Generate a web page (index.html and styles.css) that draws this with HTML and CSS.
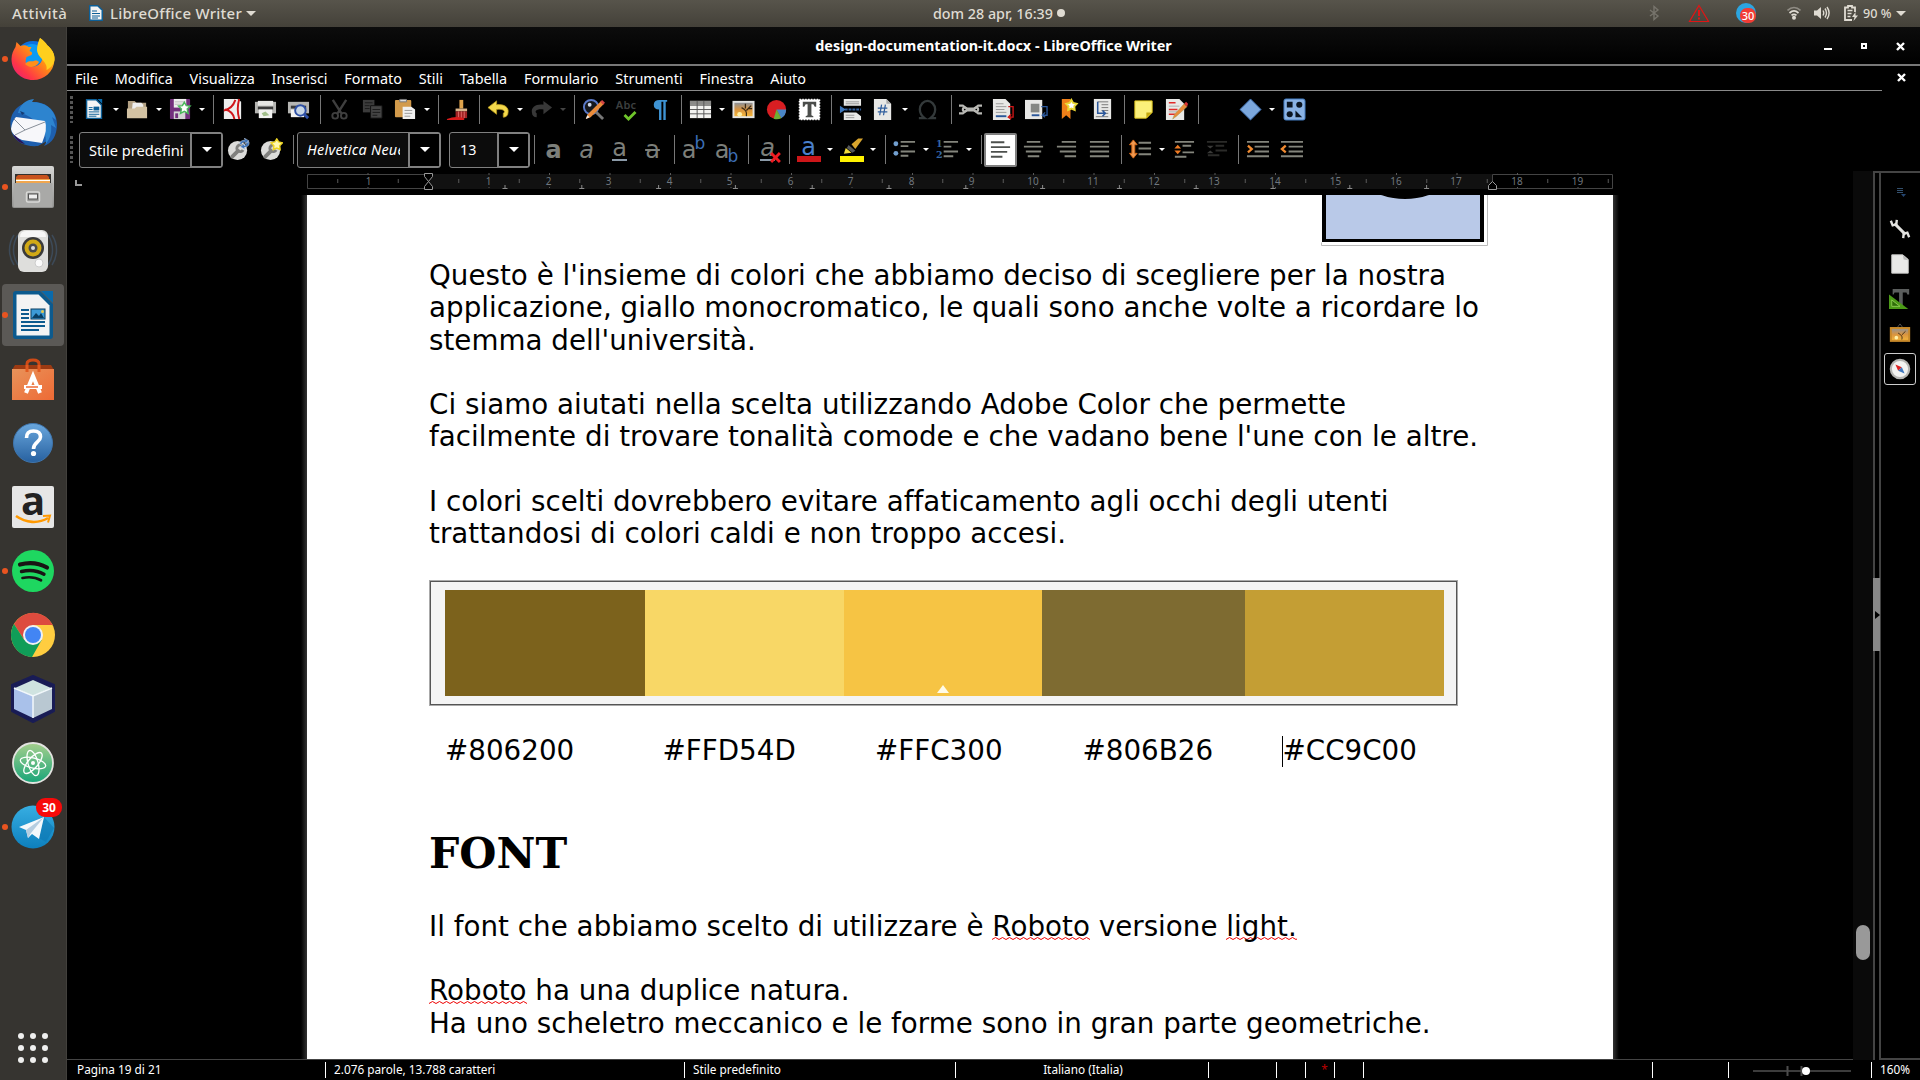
FILE: index.html
```html
<!DOCTYPE html>
<html lang="it">
<head>
<meta charset="utf-8">
<title>design-documentation-it.docx - LibreOffice Writer</title>
<link rel="stylesheet" href="styles.css">
</head>
<body>
<svg class="defs" width="0" height="0">
  <defs>
    <linearGradient id="metal" x1="0" y1="0" x2="0" y2="1"><stop offset="0" stop-color="#d8d8d6"/><stop offset="1" stop-color="#8f8f8d"/></linearGradient>
    <linearGradient id="blue" x1="0" y1="0" x2="0" y2="1"><stop offset="0" stop-color="#6aa7dd"/><stop offset="1" stop-color="#2761a0"/></linearGradient>
    <linearGradient id="tele" x1="0" y1="0" x2="0" y2="1"><stop offset="0" stop-color="#37aee2"/><stop offset="1" stop-color="#0d7fbd"/></linearGradient>
    <linearGradient id="atom" x1="0" y1="0" x2="0" y2="1"><stop offset="0" stop-color="#a5cf8c"/><stop offset="1" stop-color="#17a578"/></linearGradient>
    <linearGradient id="bag" x1="0" y1="0" x2="1" y2="1"><stop offset="0" stop-color="#e8935a"/><stop offset="1" stop-color="#ee6a35"/></linearGradient>
    <linearGradient id="fox" x1="1" y1="0" x2="0" y2="1"><stop offset="0" stop-color="#ffe226"/><stop offset=".45" stop-color="#ff8a16"/><stop offset=".75" stop-color="#ff3647"/><stop offset="1" stop-color="#e31587"/></linearGradient>
    <linearGradient id="sunset" x1="0" y1="0" x2="0" y2="1"><stop offset="0" stop-color="#8d9299"/><stop offset=".5" stop-color="#d99440"/><stop offset="1" stop-color="#f5b63a"/></linearGradient>
    <symbol id="wrench" viewBox="0 0 24 24"><circle cx="11" cy="13" r="10" fill="#dcdcda"/><path d="M5.500 19.500l6-6" stroke="#80807e" stroke-width="4" stroke-linecap="round"/><path d="M16.500 8.500a3.500 3.500 0 1 0 .3 4" fill="none" stroke="#80807e" stroke-width="3"/></symbol>
  </defs>
</svg>

<header class="topbar">
  <span class="activities">Attività</span>
  <span class="app-menu">
    <svg width="14" height="16" viewBox="0 0 14 16"><path d="M0 0h9l5 5v11H0z" fill="#0d5f97"/><path d="M1.500 1.500h7l4 4v9h-11z" fill="#f4f4f4"/><path d="M3 6h5M3 8.500h8M3 11h8M3 13h6" stroke="#0d5f97"/></svg>
    <b>LibreOffice Writer</b><i class="tri"></i>
  </span>
  <span class="clock">dom 28 apr, 16:39 <i class="dot"></i></span>
  <span class="tray">
    <svg class="bt" width="12" height="16" viewBox="0 0 12 16"><path d="M2 5l8 6-4 3.500V1.500L10 5l-8 6" fill="none" stroke="#77746c" stroke-width="1.400"/></svg>
    <svg class="warn" width="22" height="19" viewBox="0 0 22 19"><path d="M11 1.500L20.500 17.500H1.500z" fill="none" stroke="#e01515" stroke-width="1.200"/><path d="M11 6v6M11 13.500v2" stroke="#e01515" stroke-width="2"/></svg>
    <span class="tg"><em>30</em></span>
    <svg class="wifi" width="14" height="14" viewBox="0 0 14 14"><g fill="none" stroke-width="1.700"><path d="M.5 4.500c4-4 9-4 13 0" stroke="#8f8c84"/><path d="M2.500 7c3-2.700 6-2.700 9 0M4.500 9.300c1.700-1.400 3.300-1.400 5 0" stroke="#dfdbd2"/></g><circle cx="7" cy="11.800" r="2" fill="#dfdbd2"/></svg>
    <svg class="vol" width="16" height="14" viewBox="0 0 16 14"><path d="M0 4.500h3L7 1v12L3 9.500H0z" fill="#dfdbd2"/><path d="M9 4.500q1.500 2.500 0 5M11 2.500q3 4.500 0 9M13 1q4.200 6 0 12" fill="none" stroke="#dfdbd2" stroke-width="1.400"/></svg>
    <svg class="bat" width="14" height="16" viewBox="0 0 14 16"><path d="M8 15H1V2.500h3V1h4v1.500h3V7" fill="none" stroke="#dfdbd2" stroke-width="1.800"/><path d="M3.500 5.500h5M3.500 8.500h4M3.500 11.500h3" stroke="#dfdbd2" stroke-width="1.500"/><path d="M11.500 7L8 12h2.500L9.500 16l4.500-5.500h-2.500z" fill="#dfdbd2"/></svg>
    <b class="pct">90 %</b><i class="tri"></i>
  </span>
</header>

<div class="desktop">
  <nav class="dock">
    <div class="app run"><svg width="46" height="46" viewBox="0 1 46 46"><circle cx="23" cy="24" r="18" fill="#0a6fe0"/><circle cx="22" cy="20" r="11" fill="#0b9bf5"/><path d="M20 31c8 2 14-4 12-12-2-6-4-7-3-12l1-4c4 3 6 5 7 7 5 4 8 9 7.500 15-.8 12-10 20-21.500 20C11 45 1.500 36 1.500 24c0-5 2-9 4-12L6.500 7l4 4c3-1.500 6-1 8 1h3l-2 4c3 1 3 2 2 4l-5 2c-2 6 0 9 3.500 9z" fill="url(#fox)"/><path d="M30 3c4 3 6 5 7 7 5 4 8 9 7.500 15-1 5-4 8-8 10 2-8-9-12-9.500-20 0-4 1-8 3-12z" fill="#ffcf1d"/><path d="M15 29c3-4 7-2 9-3s4 0 5 1c-2 5-9 7-14 2z" fill="#ff8f1a"/></svg></div>
    <div class="app"><svg width="50" height="50" viewBox="0 0 50 50"><path d="M4 35C-2 17 10 4 24 4c14-1 25 9 25 22 0 12-5 19-13 22l3-5-9 5C18 49 8 45 4 35z" fill="#1e5fae"/><path d="M10 15C12 6 18 2 26 1l-2 3c12 0 22 6 24 18l-4-3 4 11-5-3c1 8-1 13-5 19 0-10-2-18-9-22C22 19 17 15 10 15z" fill="#2d84cf"/><path d="M3 31q1-8 5-12l29 4q3 8-3 22l-20-3Q4 38 3 31z" fill="#f7f7fa"/><path d="M6 21l11 11 20-8M17 32l-10 5" fill="none" stroke="#888f99"/><path d="M5 36l12 10c-6-1-10-5-12-10z" fill="#2b1055"/><path d="M12 13l5 2-3 2z" fill="#163c75"/></svg></div>
    <div class="app run"><svg width="42" height="44" viewBox="0 0 42 44"><rect x="0" y="1" width="42" height="42" rx="2" fill="url(#metal)"/><rect x="3" y="9" width="36" height="11" fill="#33312e"/><path d="M4 12l2-2h29l2 2v7H4z" fill="#c8521d"/><path d="M4 14h34v5H4z" fill="#f0a64e"/><path d="M4 15.500h34" stroke="#fff" stroke-width="1"/><rect x="1.500" y="18" width="39" height="24" fill="#a9a9a7"/><rect x="14.500" y="27" width="13" height="10" rx="1.500" fill="#9a9a98" stroke="#d9d9d7" stroke-width="1.500"/><rect x="16.500" y="29" width="9" height="5" fill="#eee" stroke="#555"/></svg></div>
    <div class="app"><svg width="50" height="48" viewBox="0 0 50 48"><g fill="none" stroke="#3d4a58" stroke-width="1.500"><path d="M10 8C4 17 4 29 10 38M6 8C0 17 0 29 6 38M40 8c6 9 6 21 0 30M44 8c6 9 6 21 0 30"/></g><rect x="10" y="3" width="30" height="42" rx="6" fill="#dededc"/><path d="M12 10q0-6 6-6h14q6 0 6 6z" fill="#f6f6f6"/><circle cx="25" cy="21" r="11" fill="#3a3a3a"/><circle cx="25" cy="21" r="8.500" fill="#d1a916"/><circle cx="25" cy="21" r="4.500" fill="#4b4b4b"/><circle cx="25" cy="21" r="2" fill="#ddd"/><circle cx="31" cy="36" r="4" fill="#fafafa" stroke="#ccc"/></svg></div>
    <div class="app run active"><svg width="40" height="48" viewBox="0 0 40 48"><path d="M3 0h24l13 13v32q0 3-3 3H3q-3 0-3-3V3q0-3 3-3z" fill="#0c5a8e"/><path d="M28 0h12v12z" fill="#0a6aab"/><path d="M3.500 3.500h22l11 11v30h-33z" fill="#f3f3f3"/><path d="M8 19h8M8 23h8M8 27h8M8 31h24M8 35h24M8 39h18" stroke="#0c5a8e" stroke-width="2"/><rect x="18" y="18" width="14" height="10" fill="#3c9ad6" stroke="#083e63"/><path d="M19 27l4-5 3 3 2-3 3 5z" fill="#083e63"/><circle cx="29.500" cy="20.500" r="1.500" fill="#e8c84a"/></svg></div>
    <div class="app"><svg width="42" height="44" viewBox="0 0 42 44"><path d="M15 13V7q0-4 6-4t6 4v6" fill="none" stroke="#cf4b17" stroke-width="3"/><path d="M3 8h36l3 5H0z" fill="#9c3a12"/><path d="M0 12h42v31H0z" fill="url(#bag)"/><path d="M15 15V8M27 15V8" stroke="#e15a20" stroke-width="3"/><path d="M14 36l7-17 7 17" fill="none" stroke="#fff" stroke-width="4"/><path d="M12 30h18" stroke="#fff" stroke-width="4"/><path d="M14 30h12" stroke="#ee6a35" stroke-width="1.500"/></svg></div>
    <div class="app"><svg width="42" height="42" viewBox="0 0 42 42"><circle cx="21" cy="21" r="19.500" fill="url(#blue)" stroke="#3f75ad"/><path d="M14.500 16q0-7 7-7t7 6c0 5-7 5-7 12" fill="none" stroke="#fff" stroke-width="3.600"/><circle cx="21.500" cy="31.500" r="2.600" fill="#fff"/></svg></div>
    <div class="app"><span class="amazon">a<svg width="38" height="11" viewBox="0 0 38 11"><path d="M2 2c10 7 22 8 32 2" fill="none" stroke="#ff9900" stroke-width="2.600"/><path d="M29 2l7-.5-2 7" fill="none" stroke="#ff9900" stroke-width="2"/></svg></span></div>
    <div class="app run"><svg width="42" height="42" viewBox="0 0 42 42"><circle cx="21" cy="21" r="21" fill="#1ed760"/><g fill="none" stroke="#191414" stroke-linecap="round"><path d="M8 14.500c9-2.500 19-1.500 27 3" stroke-width="4.200"/><path d="M9.500 21.500c8-2 16-1 22.500 2.700" stroke-width="3.400"/><path d="M10.500 28c7-1.500 13-.8 18.500 2.300" stroke-width="2.700"/></g></svg></div>
    <div class="app"><svg width="46" height="46" viewBox="-23 -23 46 46"><circle r="22" fill="#ffcd40"/><path d="M-19.050 -11A22 22 0 0 1 19.800 -10H0L-8.700 5z" fill="#dd4b3e"/><path d="M-19.050 -11A22 22 0 0 0 -1 22L8.700 5H-8.700z" fill="#109d58"/><circle r="10" fill="#f1f1f1"/><circle r="8" fill="#4285f4"/></svg></div>
    <div class="app"><svg width="48" height="48" viewBox="0 0 48 48"><path d="M24 1l21 9v26L24 47 3 36V10z" fill="#191c55" stroke="#191c55" stroke-width="2" stroke-linejoin="round"/><path d="M24 5l18 8-18 8-18-8z" fill="#cfe3e0"/><path d="M5 13l19 8v22L5 34z" fill="#a9c1ea"/><path d="M43 13l-19 8v22l19-9z" fill="#b9c8d2"/><path d="M5 13l19 8 19-8M24 21v22" fill="none" stroke="#f2f8fb" stroke-width="1.500"/></svg></div>
    <div class="app"><svg width="42" height="42" viewBox="0 0 42 42"><circle cx="21" cy="21" r="20" fill="url(#atom)" stroke="#e3e3e0" stroke-width="1.800"/><g fill="none" stroke="#fff" stroke-width="1.300"><ellipse cx="21" cy="21" rx="13" ry="5" transform="rotate(14 21 21)"/><ellipse cx="21" cy="21" rx="13" ry="5" transform="rotate(74 21 21)"/><ellipse cx="21" cy="21" rx="13" ry="5" transform="rotate(130 21 21)"/></g><circle cx="21" cy="21" r="2" fill="#fff"/></svg></div>
    <div class="app run"><svg width="44" height="44" viewBox="0 0 44 44"><circle cx="22" cy="22" r="21.500" fill="url(#tele)"/><path d="M33 12l10 11-8 14-7-4z" fill="#0d78b3" opacity=".6"/><path d="M8 22l25-10-5 22-7-5-4 4-2-8z" fill="#f4f8fb"/><path d="M15 25l18-13-13 16-3 5z" fill="#b5cde0"/></svg><span class="badge">30</span></div>
    <div class="grid-btn"><i></i><i></i><i></i><i></i><i></i><i></i><i></i><i></i><i></i></div>
  </nav>

  <main class="window">
    <div class="titlebar"><b>design-documentation-it.docx - LibreOffice Writer</b>
      <span class="winbtns"><i class="min"></i><i class="max"></i><svg width="9" height="9" viewBox="0 0 9 9"><path d="M1 1l7 7M8 1L1 8" stroke="#fff" stroke-width="2.400"/></svg></span></div>
    <div class="menubar"><div class="menus"><span>File</span><span>Modifica</span><span>Visualizza</span><span>Inserisci</span><span>Formato</span><span>Stili</span><span>Tabella</span><span>Formulario</span><span>Strumenti</span><span>Finestra</span><span>Aiuto</span></div>
      <svg width="9" height="9" viewBox="0 0 9 9"><path d="M1 1l7 7M8 1L1 8" stroke="#fff" stroke-width="2.400"/></svg></div>

    <div class="toolbar first">
      <i class="grip"></i>
      <span class="ic"><svg viewBox="0 0 24 24"><path d="M3 1h11l6 6v15H3z" fill="#0d5f97"/><path d="M15 1h5v5z" fill="#0a6aab"/><path d="M4.500 2.500h9l5 5v13h-14z" fill="#f5f5f5"/><path d="M6 10h4M6 12h4M6 14.500h11M6 17h11M6 19h8" stroke="#0d5f97"/><rect x="11" y="9" width="6" height="4" fill="#0d5f97"/></svg></span><i class="dd"></i>
      <span class="ic"><svg viewBox="0 0 24 24"><path d="M2 3h7l2 2h10v7H2z" fill="#b2a083"/><path d="M7 5h9l2 2v7H6z" fill="#eee"/><path d="M1 21V11h8l2-2h11v12z" fill="#d3c2a3"/></svg></span><i class="dd"></i>
      <span class="ic"><svg viewBox="0 0 24 24"><rect x="1" y="1" width="21" height="21" rx="1" fill="#73307d"/><rect x="5" y="1" width="13" height="9" fill="#eee"/><path d="M6 4h11M6 6.500h11" stroke="#bbb"/><rect x="5" y="14" width="12" height="8" fill="#d5d5d5"/><rect x="6.500" y="16" width="3" height="5" fill="#73307d"/><path d="M16 4.500l2 3.500 4 .5-3 3 1 4.500-4-2-4 2 1-4.500-3-3 4-.5z" fill="#fff" stroke="#49b85a" stroke-width="1.500"/></svg></span><i class="dd"></i><i class="sep"></i>
      <span class="ic"><svg viewBox="0 0 24 24"><path d="M3 1h14l4 3v18H3z" fill="#eee"/><path d="M15 2c-2 6-6 10-12 11M4 12c5 1 9 4 10 10M19 1c-2 7-2 14 0 21" fill="none" stroke="#d0161b" stroke-width="2"/></svg></span>
      <span class="ic"><svg viewBox="0 0 24 24"><path d="M1 4h22v12H1z" fill="#b5b5b2"/><path d="M4 3h16v5H4z" fill="#e6e6e4"/><path d="M4 9h16v3H4z" fill="#3a3a3a"/><path d="M5 12h14v9H5z" fill="#f2f2f0"/><path d="M8 16l4-2 4 4-6 1z" fill="#a2bf8b"/></svg></span>
      <span class="ic"><svg viewBox="0 0 24 24"><path d="M1 4h22v12H1z" fill="#b5b5b2"/><path d="M4 8h16v3H4z" fill="#3a3a3a"/><path d="M4 12h14v8H4z" fill="#f2f2f0"/><circle cx="14" cy="13" r="5.500" fill="#c7d6e6" stroke="#2d4fa5" stroke-width="2"/><path d="M18 17l4 4" stroke="#2d4fa5" stroke-width="3"/></svg></span><i class="sep"></i>
      <span class="ic"><svg viewBox="0 0 24 24"><g fill="none" stroke="#3f3f3f" stroke-width="2"><path d="M5 2l9 14M19 2l-9 14" stroke-width="2.500"/><circle cx="7.500" cy="18.500" r="3"/><circle cx="16.500" cy="18.500" r="3"/></g></svg></span>
      <span class="ic"><svg viewBox="0 0 24 24"><path d="M2 2h12v13H2z" fill="#3b3b3b"/><path d="M10 8h12v13H10z" fill="#444" stroke="#111"/><path d="M4 5h8M4 8h5M4 11h5M12 12h8M12 15h8M12 18h5" stroke="#1a1a1a"/></svg></span>
      <span class="ic"><svg viewBox="0 0 24 24"><rect x="1" y="2" width="17" height="18" rx="1" fill="#d29a4b"/><path d="M6 4V1.500h7V4z" fill="#ddd" stroke="#777"/><path d="M9 9h9l4 3v10H9z" fill="#f0f0f0"/><path d="M11 13h8M11 16h8M11 19h6" stroke="#999"/></svg></span><i class="dd"></i><i class="sep"></i>
      <span class="ic"><svg viewBox="0 0 24 24"><path d="M14 2h4v9h-4z" fill="#dfa34c"/><path d="M10 11h12v3H10z" fill="#d9b48a"/><path d="M10 14h12v7H10z" fill="#a02323"/><path d="M13 14v7M16 14v7M19 14v7" stroke="#d66"/><path d="M1 22q9-4 18-1v2H1z" fill="#d81b1b"/></svg></span><i class="sep"></i>
      <span class="ic"><svg viewBox="0 0 24 24"><path d="M1 10l9-7v4c8-1 13 3 12 8 0 3-2 5-5 5v-4c3-2 0-5-7-4v5z" fill="#f3d84b" stroke="#b99a1d" stroke-width=".8"/></svg></span><i class="dd"></i>
      <span class="ic"><svg viewBox="0 0 24 24"><path d="M23 10l-9-7v4C6 6 1 10 2 15c0 3 2 5 5 5v-4c-3-2 0-5 7-4v5z" fill="#383838"/></svg></span><i class="dd off"></i><i class="sep"></i>
      <span class="ic"><svg viewBox="0 0 24 24"><circle cx="9.500" cy="9.500" r="7.500" fill="#16181d" stroke="#5a79c8" stroke-width="2"/><circle cx="8" cy="7" r="2" fill="#cdd6ea"/><path d="M14 14l8 8" stroke="#777" stroke-width="3"/><path d="M4 22l2-5L20 3l3 3L9 20z" fill="#e98b3a"/><path d="M19 4l2-2 3 3-2 2z" fill="#d54545"/><path d="M4 22l1.500-4 2.500 2z" fill="#eee"/></svg></span>
      <span class="ic abc"><b>Abc</b><svg viewBox="0 0 14 10"><path d="M1.500 4l4 4 7-7" fill="none" stroke="#6fc52b" stroke-width="2.800"/></svg></span>
      <span class="ic"><svg viewBox="0 0 24 24"><path d="M6 7q0-5 6-5h8v2h-1.500v19H16V4h-2v19h-2.500V12Q6 12 6 7z" fill="#3e93d3"/></svg></span><i class="sep"></i>
      <span class="ic"><svg viewBox="0 0 24 24"><rect x="1" y="3" width="22" height="18" fill="#f2f2f0"/><rect x="1" y="3" width="22" height="4" fill="#8a8a88"/><path d="M1 7.500h22M1 12h22M1 16.500h22M8.500 3v18M15.500 3v18" stroke="#555"/></svg></span><i class="dd"></i>
      <span class="ic"><svg viewBox="0 0 24 24"><rect x=".5" y="3" width="23" height="18" fill="#e4e4e2"/><rect x="2.500" y="5" width="19" height="14" fill="url(#sunset)"/><path d="M15 19c1-5-1-7-5-9M15 13l5-5M14 11V6M17 11h4" fill="none" stroke="#3a2a16" stroke-width="1.300"/><circle cx="8" cy="17" r="2.500" fill="#fff0a8"/></svg></span>
      <span class="ic"><svg viewBox="0 0 24 24"><circle cx="12" cy="12" r="10" fill="#d81e22"/><path d="M12 12h10a10 10 0 0 1-5 9z" fill="#4a86c5"/><path d="M12 12l5 9a10 10 0 0 1-8 .6z" fill="#6fae34"/></svg></span>
      <span class="ic"><svg viewBox="0 0 24 24"><rect x="1.500" y="1.500" width="21" height="21" fill="#fff" stroke="#fff" stroke-width="1.500" stroke-dasharray="1.500 1.500"/><path d="M5 4h14v5h-1.500L16 6.500h-2V18l2 1v1H8v-1l2-1V6.500H8L6.500 9H5z" fill="#4b4d4b"/></svg></span><i class="sep"></i>
      <span class="ic"><svg viewBox="0 0 24 24"><path d="M5 1h18v7H5zM5 15h13l5 4v4H5z" fill="#e8e8e6"/><path d="M7 4h14M7 6h14M7 18h9M7 20.500h9" stroke="#999"/><path d="M6 12h17" stroke="#315f9e" stroke-width="2" stroke-dasharray="3 1"/><path d="M1 8l6 4-6 4z" fill="#3e77bb"/></svg></span>
      <span class="ic"><svg viewBox="0 0 24 24"><path d="M2 1h13l5 5v17H2z" fill="#e8e8e6"/><path d="M15 1v5h5z" fill="#aaa"/><path d="M10 7l-2 11M14 7l-2 11M6 10.500h10M6 14.500h10" stroke="#315f9e" stroke-width="1.300"/></svg></span><i class="dd"></i>
      <span class="ic omega"><svg viewBox="0 0 24 24"><path d="M3 21h6c-4-3-5-6-5-9 0-5 4-9 8-9s8 4 8 9c0 3-1 6-5 9h6" fill="none" stroke="#33393a" stroke-width="2.400"/></svg></span><i class="sep"></i>
      <span class="ic"><svg viewBox="0 0 24 24"><g fill="none" stroke="#b8b8b4" stroke-width="2.200"><path d="M0 8h4l4 3h8l4-3h4M0 16h4l4-3h8l4 3h4"/><circle cx="6" cy="12" r="2"/><circle cx="18" cy="12" r="2"/></g></svg></span>
      <span class="ic"><svg viewBox="0 0 24 24"><path d="M1 1h13l5 5v17H1z" fill="#e8e8e6"/><path d="M4 6h8M4 9h11M4 12h9M4 15h11" stroke="#999"/><path d="M4 19h11" stroke="#2b579a" stroke-width="2"/><path d="M17 9h5v11h-5m3-3l-3 3 3 2" fill="none" stroke="#d01717" stroke-width="1.400"/></svg></span>
      <span class="ic"><svg viewBox="0 0 24 24"><path d="M0 2h18v20H0z" fill="#e8e8e6"/><path d="M6 6h9v9H6z" fill="#858784"/><path d="M7 18h8" stroke="#2b579a" stroke-width="2"/><path d="M17 9h6v9h-5m3-3l-3 3 3 2" fill="none" stroke="#2b579a" stroke-width="1.400"/></svg></span>
      <span class="ic"><svg viewBox="0 0 24 24"><path d="M4 1h9v21l-4.500-4L4 22z" fill="#ef8019"/><path d="M14 2l1.800 3.200 3.700.8-2.500 2.800.4 3.700-3.400-1.500-3.400 1.500.4-3.700L8.500 6l3.700-.8z" fill="#fff" stroke="#ead733" stroke-width="2"/></svg></span>
      <span class="ic"><svg viewBox="0 0 24 24"><path d="M3 1h18v21H3z" fill="#e8e8e6"/><path d="M7 4h11M11 7h7M11 10h7M11 13h7M11 16h7M5 19.500h13" stroke="#777"/><path d="M7 4v12h8m-3-3l3 3-3 3" fill="none" stroke="#2b579a" stroke-width="1.600"/></svg></span><i class="sep"></i>
      <span class="ic"><svg viewBox="0 0 24 24"><path d="M3 3h18v12l-6 6H3z" fill="#fbf07a"/><path d="M21 15l-6 6v-6z" fill="#c5a90e"/><path d="M3 3h18v12l-6 6H3z" fill="none" stroke="#e3c81c"/></svg></span>
      <span class="ic"><svg viewBox="0 0 24 24"><path d="M1 1h14l5 5v17H1z" fill="#e8e8e6"/><path d="M4 5h7M4 12h9M4 17h7" stroke="#e02a2a" stroke-width="1.400"/><path d="M4 8.500h11M4 14.500h9" stroke="#aaa"/><path d="M8 22l2-5L20 6l3 3L12 19z" fill="#e98b3a" stroke="#995" stroke-width=".5"/><path d="M20 6l2-2 2 2-1 3z" fill="#d33"/></svg></span><i class="sep"></i><i class="gap"></i>
      <span class="ic"><svg viewBox="0 0 24 24"><path d="M12 1L23 12 12 23 1 12z" fill="#7ba7dd" stroke="#3c6fb1"/></svg></span><i class="dd"></i>
      <span class="ic wide"><svg viewBox="0 0 24 24"><rect x="1" y="1" width="22" height="22" rx="2" fill="#8ab2e4" stroke="#3f78bd"/><path d="M4 4h6v6H4zM13 20v-7l7 7z" fill="#0b1522"/><circle cx="17" cy="7" r="3.200" fill="#0b1522"/><circle cx="7" cy="17" r="3.200" fill="#0b1522"/></svg></span>
    </div>

    <div class="toolbar second">
      <i class="grip"></i>
      <span class="combo style"><span>Stile predefini</span><i></i></span>
      <span class="ic tight"><svg viewBox="0 0 24 24"><use href="#wrench"/><path d="M13 6q1-4 6-4l-1-2 5 3-4 3v-2q-3 0-4 3zM23 4q1 5-5 6l1 2-5-3 4-3v2q3-1 3-4z" fill="#3c73bb" stroke="#cfe0f5" stroke-width=".5"/></svg></span>
      <span class="ic"><svg viewBox="0 0 24 24"><use href="#wrench"/><path d="M17.500 1l2 3 4 1-3 3 .5 4-3.500-1.500L14 12l.5-4-3-3 4-1z" fill="#fff9b0" stroke="#ecd424" stroke-width="1.500"/></svg></span><i class="sep"></i>
      <span class="combo font"><span>Helvetica Neue</span><i></i></span>
      <span class="combo size"><span>13</span><i></i></span><i class="sep tight"></i>
      <span class="ic gl"><b>a</b></span><span class="ic gl"><em>a</em></span><span class="ic gl"><u>a</u></span><span class="ic gl"><s>a</s></span><i class="sep"></i>
      <span class="ic gl">a<sup>b</sup></span><span class="ic gl">a<sub>b</sub></span><i class="sep"></i>
      <span class="ic gl"><u><em>a</em></u><svg class="x" viewBox="0 0 10 10"><path d="M1 1l8 8M9 1L1 9" stroke="#f01c22" stroke-width="2.600"/></svg></span><i class="sep"></i>
      <span class="ic gl col red">a</span><i class="dd"></i>
      <span class="ic gl col yel"><svg viewBox="0 0 24 18"><path d="M12 6l7-6h5l-8 11z" fill="#d8a52e"/><path d="M9 7l7 6-3 2-6-5z" fill="#55585a"/><path d="M4 16l2-6 6 5z" fill="#f2dc3b"/></svg></span><i class="dd"></i><i class="sep"></i>
      <span class="ic"><svg viewBox="0 0 24 24"><circle cx="3" cy="6" r="2.500" fill="#729fcf"/><circle cx="3" cy="16" r="2.500" fill="#729fcf"/><path d="M8 4h15M8 8.500h8M8 14h15M8 18.500h8" stroke="#84857c" stroke-width="2"/></svg></span><i class="dd"></i>
      <span class="ic"><svg viewBox="0 0 24 24"><text x="0" y="9.500" font-family="DejaVu Serif" font-weight="bold" font-size="10" fill="#3465a4">1</text><text x="0" y="21" font-family="DejaVu Serif" font-weight="bold" font-size="10" fill="#3465a4">2</text><path d="M8 4h15M8 9h8M8 14h15M8 19h10" stroke="#84857c" stroke-width="2"/></svg></span><i class="dd"></i><i class="sep"></i>
      <span class="ic pressed"><svg viewBox="0 0 24 24"><path d="M2 4.500h14M2 9.500h20M2 14.500h17M2 19.500h12" stroke="#4d504d" stroke-width="2"/></svg></span>
      <span class="ic"><svg viewBox="0 0 24 24"><path d="M5 4h14M2 9h20M4 14h16M6 19h12" stroke="#84857c" stroke-width="2"/></svg></span>
      <span class="ic"><svg viewBox="0 0 24 24"><path d="M7 4h15M2 9h20M5 14h17M10 19h12" stroke="#84857c" stroke-width="2"/></svg></span>
      <span class="ic"><svg viewBox="0 0 24 24"><path d="M2 4h20M2 9h20M2 14h20M2 19h20" stroke="#84857c" stroke-width="2"/></svg></span><i class="sep"></i>
      <span class="ic"><svg viewBox="0 0 24 24"><path d="M4.500 2l4 5h-2.500v9h2.500l-4 5-4-5H3V7H.5z" fill="#f09a52" stroke="#d86a18"/><path d="M10 5h13M10 11h13M10 17h13" stroke="#84857c" stroke-width="2"/></svg></span><i class="dd"></i>
      <span class="ic"><svg viewBox="0 0 24 24"><path d="M3 4h20M11 8h9M11 15h12M3 19.500h12" stroke="#84857c" stroke-width="2"/><path d="M6 7l3.500 4h-7zM6 17l3.500-4h-7z" fill="#ee7a23"/></svg></span>
      <span class="ic"><svg viewBox="0 0 24 24"><path d="M2 4h21M11 8h9M11 13h12M3 18h12" stroke="#2b2b29" stroke-width="2"/><path d="M2 8h7l-3.500 3zM2 16h7l-3.500-3z" fill="#3a3a38"/></svg></span><i class="sep"></i>
      <span class="ic"><svg viewBox="0 0 24 24"><path d="M1 4h23M9 9h15M9 14h15M1 19h23" stroke="#84857c" stroke-width="2"/><path d="M2 8l4 3.500L2 15" fill="none" stroke="#f08a30" stroke-width="2.400"/></svg></span>
      <span class="ic wide"><svg viewBox="0 0 24 24"><path d="M1 4h23M9 9h15M9 14h15M1 19h23" stroke="#84857c" stroke-width="2"/><path d="M6 8l-4 3.500L6 15" fill="none" stroke="#f08a30" stroke-width="2.400"/></svg></span>
    </div>

    <div class="work">
      <section class="editor">
        <div class="ruler">
          <i class="tabmark"></i>
          <svg width="1308" height="20" viewBox="306 173 1308 20">
            <defs>
              <pattern id="half" x="397.750" y="180" width="60.500" height="4" patternUnits="userSpaceOnUse"><rect width="1" height="4" fill="#5a5a5a"/></pattern>
              <pattern id="whole" x="367.500" y="174" width="60.500" height="15" patternUnits="userSpaceOnUse"><path d="M0 0h1v2H0zM0 14h1v1H0z" fill="#5a5a5a"/></pattern>
              <pattern id="stops" x="502.500" y="186" width="76.800" height="5" patternUnits="userSpaceOnUse"><path d="M2 0h1v3h2v1H0V3h2z" fill="#8a8a8a"/></pattern>
            </defs>
            <rect x="428" y="175" width="1064" height="15" fill="#111"/>
            <path d="M428 175.500H307.500v14H428M1492.500 175.500h120v14h-120z" fill="none" stroke="#444"/>
            <rect x="330" y="180" width="1280" height="4" fill="url(#half)"/>
            <rect x="360" y="174" width="1240" height="15" fill="url(#whole)"/>
            <rect x="502" y="186" width="930" height="5" fill="url(#stops)"/>
            <g class="nums"><text x="368.500" y="185.500">1</text><text x="488.500" y="185.500">1</text><text x="548.500" y="185.500">2</text><text x="608.500" y="185.500">3</text><text x="669.500" y="185.500">4</text><text x="729.500" y="185.500">5</text><text x="790.500" y="185.500">6</text><text x="850.500" y="185.500">7</text><text x="911.500" y="185.500">8</text><text x="971.500" y="185.500">9</text><text x="1033" y="185.500">10</text><text x="1093" y="185.500">11</text><text x="1154" y="185.500">12</text><text x="1214" y="185.500">13</text><text x="1275" y="185.500">14</text><text x="1335.500" y="185.500">15</text><text x="1396" y="185.500">16</text><text x="1456" y="185.500">17</text><text x="1517" y="185.500">18</text><text x="1577.500" y="185.500">19</text></g>
            <path d="M424.500 174.500h8v3l-4 5-4-5zM424.500 190.500h8v-3l-4-5-4 5zM1488.500 190.500h8v-4l-4-4-4 4z" fill="#000" stroke="#999"/>
          </svg>
        </div>
        <div class="canvas">
          <article class="page">
            <svg class="figure" width="167" height="51" viewBox="0 0 167 51"><path d="M.5 47.500v3h166V0" fill="none" stroke="#bbb"/><rect x="1" y="0" width="162" height="47" fill="#000"/><rect x="5" y="0" width="154" height="44" fill="#b9c9e8"/><ellipse cx="84" cy="-45" rx="60" ry="49" fill="#000"/></svg>
            <div class="para">
              <p>Questo è l'insieme di colori che abbiamo deciso di scegliere per la nostra</p>
              <p>applicazione, giallo monocromatico, le quali sono anche volte a ricordare lo</p>
              <p>stemma dell'università.</p>
            </div>
            <div class="para">
              <p>Ci siamo aiutati nella scelta utilizzando Adobe Color che permette</p>
              <p>facilmente di trovare tonalità comode e che vadano bene l'une con le altre.</p>
            </div>
            <div class="para">
              <p>I colori scelti dovrebbero evitare affaticamento agli occhi degli utenti</p>
              <p>trattandosi di colori caldi e non troppo accesi.</p>
            </div>
            <div class="palette"><i class="c1"></i><i class="c2"></i><i class="c3"></i><i class="c4"></i><i class="c5"></i></div>
            <div class="codes"><p>#806200</p><p>#FFD54D</p><p>#FFC300</p><p>#806B26</p><p class="caret">#CC9C00</p></div>
            <h1>FONT</h1>
            <div class="para">
              <p>Il font che abbiamo scelto di utilizzare è <span class="err">Roboto</span> versione <span class="err">light.</span></p>
            </div>
            <div class="para">
              <p><span class="err">Roboto</span> ha una duplice natura.</p>
              <p>Ha uno scheletro meccanico e le forme sono in gran parte geometriche.</p>
            </div>
          </article>
        </div>
      </section>
      <div class="vscroll"><i></i></div>
      <div class="splitter"><i></i></div>
      <aside class="sidebar">
        <svg class="cfg" width="10" height="10" viewBox="0 0 10 10"><path d="M0 1.500h6M0 3.500h6M0 5.500h6" stroke="#33506e"/><path d="M4 7h5l-2.500 3z" fill="#24456f"/></svg>
        <span><svg viewBox="0 0 24 24"><path d="M6 6l12 12" stroke="#e3e3e0" stroke-width="3.400"/><path d="M2 3l2 5 4-1 .5-5M22 21l-2-5-4 1-.5 5" fill="none" stroke="#e3e3e0" stroke-width="2.600"/></svg></span>
        <span><svg viewBox="0 0 24 24"><path d="M3 2h12l6 5v15H3z" fill="#e9e9e7" stroke="#cfcfcd"/><path d="M15 2l1 5 5 1z" fill="#bbb"/></svg></span>
        <span><svg viewBox="0 0 24 24"><path d="M4 1h18v6h-2l-1-2h-4v15h-4V5H6L5 7H4z" fill="#5b5e5d"/><path d="M0 7v16h21z" fill="#4c9a17"/><path d="M3 13v7h9z" fill="#2f6b0a" stroke="#8fce52"/></svg></span>
        <span><svg viewBox="0 0 24 24"><path d="M9 5l3-4 3 4" fill="none" stroke="#555"/><rect x="2" y="5.500" width="20" height="14" fill="url(#sunset)" stroke="#c98a2a" stroke-width="2.200"/><path d="M14 18c1-4-1-5-4-7M14 13l4-4" fill="none" stroke="#3a2a16"/><circle cx="8" cy="16" r="2" fill="#fff0a8"/></svg></span>
        <span class="sel"><svg viewBox="0 0 24 24"><circle cx="12" cy="12" r="10" fill="#f3f3f1" stroke="#b5b5b2" stroke-width="2.400"/><path d="M7 7l7 3-4 4z" fill="#d22"/><path d="M17 17l-3-7-4 4z" fill="#3f78bd"/></svg></span>
      </aside>
    </div>

    <footer class="status">
      <span class="s1">Pagina 19 di 21</span><span class="s2">2.076 parole, 13.788 caratteri</span><span class="s3">Stile predefinito</span><span class="s4">Italiano (Italia)</span><span class="s5"></span><span class="s6"></span><span class="s7"><em>*</em></span><span class="s7"></span><span class="s8"></span><span class="s9"></span><span class="s10"><svg width="98" height="12" viewBox="0 0 98 12"><path d="M0 6h98" stroke="#3c3c3c" stroke-width="2"/><path d="M34.500 1v10M48.500 1v10" stroke="#4c4c4c" stroke-width="2"/><circle cx="53" cy="6" r="4" fill="#fff"/></svg></span><span class="s11">160%</span>
    </footer>
  </main>
</div>
</body>
</html>
```
FILE: styles.css
```css
* { box-sizing: border-box; }
body { margin: 0; width: 1920px; height: 1080px; overflow: hidden; background: #000; color: #fff; font-family: "Noto Sans", sans-serif; font-size: 14.4px; display: flex; flex-direction: column; }
i, em { font-style: normal; }
.defs { position: absolute; }
svg { display: block; flex: none; }

/* GNOME top bar */
.topbar { height: 27px; flex: none; display: flex; align-items: center; padding-bottom: 1px; background: linear-gradient(#57544b, #444139); color: #dfdbd2; font-size: 14.3px; font-weight: 500; white-space: nowrap; }
.topbar b { font-weight: 500; }
.activities { width: 77px; padding-left: 12px; font-size: 15px; letter-spacing: .45px; }
.app-menu { width: 856px; padding-left: 12px; display: flex; align-items: center; }
.app-menu b { margin-left: 7px; width: 136px; font-size: 15px; letter-spacing: .25px; }
.tri { border: 5px solid transparent; border-top-color: #dfdbd2; border-bottom: 0; }
.clock { width: 715px; display: flex; align-items: center; }
.dot { width: 8px; height: 8px; border-radius: 50%; background: #dfdbd2; margin-left: 4px; }
.tray { display: flex; align-items: center; }
.warn { margin-left: 28px; }
.tg { width: 20px; height: 20px; border-radius: 50%; background: #2ca5e0; margin-left: 26px; padding: 5px 0 0 4px; }
.tg em { display: block; width: 16px; height: 15px; border-radius: 7px; background: #f23c34; color: #fff; font-size: 11px; line-height: 15px; text-align: center; }
.wifi { margin-left: 31px; }
.vol { margin-left: 13px; }
.bat { margin-left: 14px; }
.pct { width: 33px; margin-left: 5px; font-size: 12.6px; }

/* dock */
.desktop { flex: 1; display: flex; min-height: 0; }
.dock { width: 67px; background: #363430; display: flex; flex-direction: column; align-items: center; border-right: 1px solid #42403c; }
.app { height: 64px; width: 66px; flex: none; display: flex; align-items: center; justify-content: center; position: relative; }
.run::before { content: ""; position: absolute; left: 2px; top: 29px; width: 6px; height: 6px; border-radius: 50%; background: #e95420; }
.active { height: 62px; width: 62px; margin: 1px 0; border-radius: 4px; background: #5b5956; }
.active::before { left: 0; top: 28px; }
.badge { position: absolute; left: 36px; top: 3px; width: 26px; height: 19px; border-radius: 9px; background: #f60a0a; color: #fff; font: bold 12px/19px "Noto Sans", sans-serif; text-align: center; }
.amazon { width: 42px; height: 42px; border-radius: 2px; background: #e6e6e6; color: #222; font: bold 40px/28px "Open Sans", sans-serif; text-align: center; }
.amazon svg { margin: 0 0 0 2px; }
.grid-btn { margin-top: 174px; display: grid; grid-template-columns: repeat(3, 6px); gap: 6px; }
.grid-btn i { height: 6px; border-radius: 50%; background: #efefee; }

/* window chrome */
.window { flex: 1; display: flex; flex-direction: column; min-width: 0; }
.titlebar { height: 39px; flex: none; background: linear-gradient(#0c0c0c, #000); border-bottom: 2px solid #777; display: flex; align-items: center; justify-content: center; position: relative; font-size: 14.400px; }
.winbtns { position: absolute; right: 15px; top: 0; height: 38px; display: flex; align-items: center; }
.min { width: 8px; height: 2px; background: #fff; margin: 6px 29px 0 0; }
.max { width: 6px; height: 6px; border: 2px solid #fff; margin-right: 29px; }
.menubar { height: 25px; flex: none; display: flex; align-items: center; }
.menubar > svg { margin: 0 0 2px 15px; }
.menus { width: 1815px; flex: none; height: 25px; border-bottom: 1px solid #8a8a8a; padding-left: 8px; display: flex; gap: 16.800px; line-height: 25px; }

.toolbar { flex: none; display: flex; align-items: center; }
.first { height: 37px; }
.second { height: 43px; }
.grip { width: 3px; height: 27px; margin: 0 4.500px 0 3px; background: repeating-linear-gradient(#555 0 3px, #000 3px 5px); flex: none; }
.second .grip { margin-right: 6px; }
.ic { width: 33px; height: 34px; flex: none; display: flex; align-items: center; justify-content: center; }
.ic > svg { width: 23px; height: 23px; }
.wide { width: 35px; }
.omega { width: 36px; }
.tight { margin-left: -1px; }
.abc { flex-direction: column; }
.abc b { font-size: 11px; font-weight: 600; line-height: 12px; letter-spacing: .2px; color: #3c3f3f; }
.abc > svg { width: 14px; height: 10px; margin-left: 8px; }
.dd { width: 10px; flex: none; display: flex; justify-content: center; }
.dd::before { content: ""; border: 3px solid transparent; border-top-color: #fff; border-bottom: 0; }
.off::before { border-top-color: #444; }
.sep { width: 8px; height: 29px; flex: none; background: linear-gradient(#777, #777) 5px 0 / 1px 100% no-repeat; }
.dd + .sep { margin-left: 2px; }
.first .dd + .sep { margin-left: 1px; }
.gap { width: 33px; flex: none; }
.combo { height: 36px; border: 1px solid #808080; border-radius: 3px; flex: none; display: flex; background: #0c0c0c; font-size: 14.3px; }
.combo span { flex: 1; overflow: hidden; white-space: nowrap; margin-left: 9px; line-height: 34px; }
.combo > i { border: 2px solid #808080; border-width: 1px 1px 1px 2px; background: #000; width: 32px; flex: none; display: flex; align-items: center; justify-content: center; }
.combo > i::before { content: ""; border: 5px solid transparent; border-top-color: #fff; border-bottom: 0; }
.style { width: 144px; }
.style span { margin-right: 5px; font-size: 14.6px; }
.font { width: 144px; margin: 0 8px 0 1px; font-style: italic; }
.font span { margin-right: 8px; font-size: 14.400px; letter-spacing: .25px; }
.size { width: 81px; }
.size span { margin-left: 10px; }
.gl { font: 24px/24px "DejaVu Sans", sans-serif; color: #7c7f7a; position: relative; }
.gl em { font-style: italic; }
.gl u { text-decoration: none; border-bottom: 2px solid #8b9aa8; line-height: 20px; height: 23px; }
.gl sup, .gl sub { font-size: 17px; color: #3c6fb5; line-height: 17px; margin: 2px 0 2px -2px; align-self: flex-start; }
.gl sub { align-self: flex-end; }
.gl .x { position: absolute; right: 3px; bottom: 4px; width: 11px; height: 11px; }
.col { flex-direction: column; color: #4a80cc; line-height: 18px; }
.col::after { content: ""; width: 24px; height: 6px; background: #cc1619; }
.yel::after { background: #fff200; }
.col > svg { height: 18px; }
.pressed { background: #fff; border: 2px solid #808080; border-radius: 2px; }

/* work area */
.work { flex: 1; display: flex; min-height: 0; }
.editor { width: 1786px; display: flex; flex-direction: column; }
.ruler { height: 24px; flex: none; display: flex; padding-top: 1px; }
.ruler svg { margin-left: 224px; }
.tabmark { width: 7px; height: 6px; margin: 8px 0 0 8px; border: solid #999; border-width: 0 0 2px 2px; }
.nums text { font: 10px "Noto Sans", sans-serif; fill: #6f777e; text-anchor: middle; }
.canvas { flex: 1; display: flex; padding-left: 234px; min-height: 0; overflow: hidden; border-bottom: 1px solid #444; }
.page { width: 1318px; flex: none; border: solid; border-width: 0 6px; border-image: linear-gradient(90deg, #000, #333 6px, #333 1312px, #000) 0 6; background: #fff content-box; color: #000; overflow: hidden; white-space: nowrap; }
.page p { margin: 0; font: 27.730px/32.290px "DejaVu Sans", sans-serif; letter-spacing: .025px; }
.figure { margin: 0 0 14px 1014px; }
.para { margin: 0 0 32.290px 122px; }
.palette { width: 1029px; height: 126px; margin: -3px 0 29.500px 122px; border: 2px solid #555; outline: 1px solid #aaa; outline-offset: -1px; background: #f4f4f4; padding: 8px 12px 8px 14px; display: grid; grid-template-columns: 200px 199px 198px 203px 199px; }
.palette i { filter: blur(.5px); }
.c1 { background: #7c621c; }
.c2 { background: #f8d766; }
.c3 { background: #f6c444; display: flex; align-items: flex-end; justify-content: center; }
.c3::after { content: ""; border: 6px solid transparent; border-bottom: 8px solid #fffbe8; border-top: 0; margin-bottom: 3px; }
.c4 { background: #7e6b31; }
.c5 { background: #c49e34; }
.codes { display: grid; grid-template-columns: 217.500px 212.500px 207.500px 200px 200px; margin-left: 138px; }
.caret { position: relative; }
.caret::before { content: ""; position: absolute; left: -1px; top: 1px; width: 1px; height: 31px; background: #000; }
.page h1 { margin: 60.800px 0 32.500px 122px; font: bold 42.670px/49.670px "DejaVu Serif", serif; }
.err { background: url("data:image/svg+xml,%3Csvg xmlns='http://www.w3.org/2000/svg' width='7' height='3'%3E%3Cpath d='M0 2.500L3.500 .5L7 2.500' fill='none' stroke='%23e00' stroke-width='1'/%3E%3C/svg%3E") 0 27px repeat-x; }

.vscroll { width: 20px; flex: none; background: #0a0a0a; }
.vscroll i { display: block; width: 14px; height: 35px; margin: 754px 0 0 3px; border-radius: 7px; background: #999; }
.splitter { width: 8px; flex: none; border: 2px solid #444; border-bottom-width: 0; background: #000; display: flex; }
.splitter i { width: 7px; height: 73px; margin: 405px 0 0 -2px; background: #888; flex: none; display: flex; align-items: center; justify-content: flex-end; }
.splitter i::before { content: ""; border: 4px solid transparent; border-left: 5px solid #000; border-right: 0; }
.sidebar { flex: 1; border-top: 2px solid #444; border-bottom: 2px solid #444; display: flex; flex-direction: column; align-items: center; padding-right: 1px; }
.sidebar span { width: 32px; height: 32px; margin-bottom: 3px; display: flex; align-items: center; justify-content: center; }
.sidebar span svg { width: 22px; height: 22px; }
.cfg { margin: 14px 0 16px 3px; }
.sidebar .sel { border: 1px solid #ccc; border-radius: 3px; }

.status { height: 20px; flex: none; display: flex; align-items: center; font-size: 11.800px; white-space: nowrap; }
.status span { height: 16px; line-height: 15px; border-right: 1px solid #fff; flex: none; }
.s1 { width: 259px; padding-left: 10px; }
.s2 { width: 359px; padding-left: 8px; }
.s3 { width: 271px; padding-left: 8px; }
.s4 { width: 253px; padding-left: 2px; text-align: center; }
.s5 { width: 68px; }
.s6 { width: 29px; }
.s7 { width: 29px; text-align: center; color: #b00; }
.s7 em { padding-left: 9px; }
.s8 { width: 289px; }
.s9 { width: 76px; }
.s10 { width: 143px; padding: 3px 0 0 24px; }
.status .s11 { border: 0; padding-left: 8px; }
```
